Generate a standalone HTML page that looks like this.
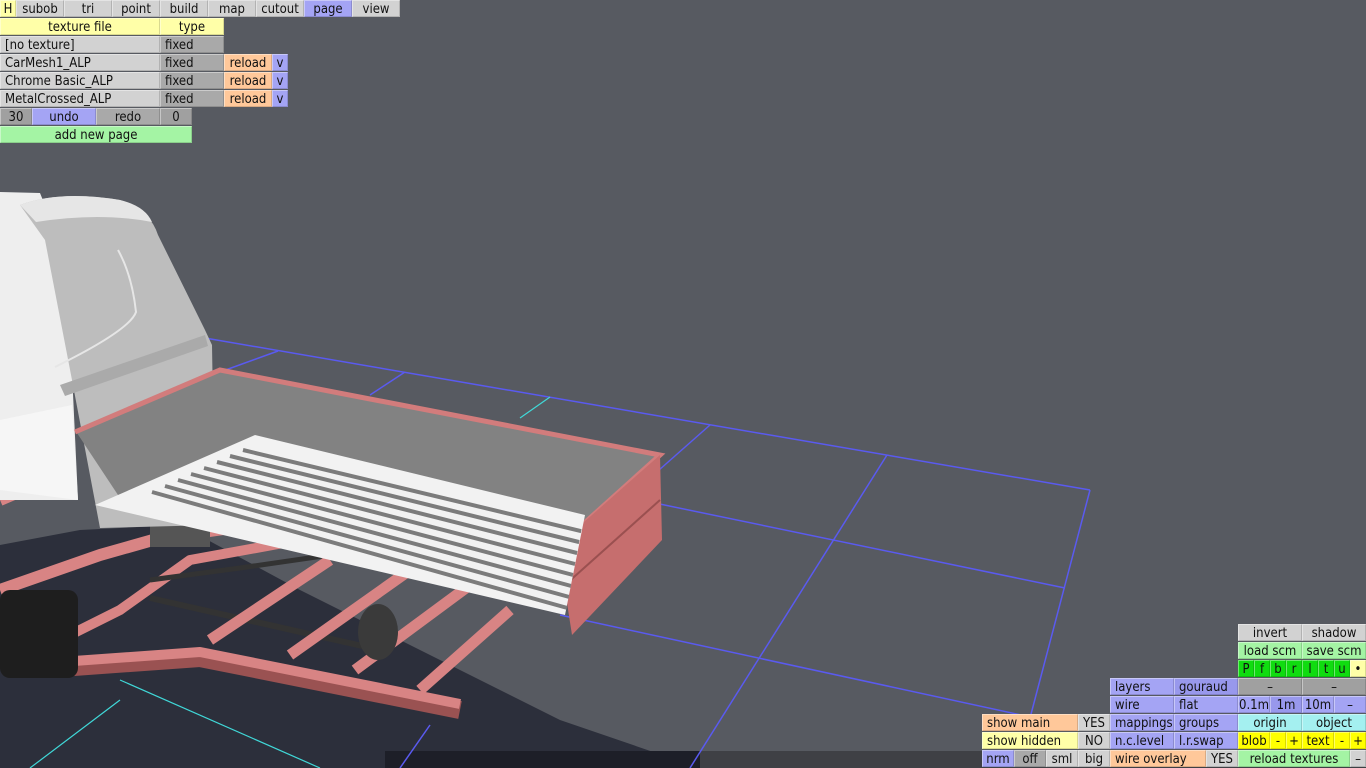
<!DOCTYPE html>
<html><head><meta charset="utf-8"><style>
html,body{margin:0;padding:0;width:1366px;height:768px;overflow:hidden;background:#575a61;}
.b{position:absolute;height:17px;box-sizing:border-box;font:13px/17px "DejaVu Sans Condensed","Liberation Sans",sans-serif;color:#111;text-align:center;white-space:nowrap;overflow:hidden;border-right:1px solid rgba(0,0,0,.15);border-bottom:1px solid rgba(0,0,0,.15);border-top:1px solid rgba(255,255,255,.4);border-left:1px solid rgba(255,255,255,.4)}
.l{text-align:left;padding-left:4px}
.g{background:#d2d2d2}.dg{background:#a9a9a9}.y{background:#ffffa8}.o{background:#ffc89a}.bl{background:#a4a4f4}.bd{background:#9898ec}.gr{background:#a4f4a4}.c{background:#a4f0f0}.gg{background:#10dc10}.yy{background:#ffff00}.mg{background:#a0a0a0}
</style></head><body>
<svg width="1366" height="768" style="position:absolute;left:0;top:0">
<defs><clipPath id="cp"><polygon points="97,504 256,436 584,516 566,612"/></clipPath></defs>
<polygon points="0,545 80,530 180,525 300,590 560,720 700,768 0,768" fill="#2c2f3b"/>
<polygon points="385,751 1366,751 1366,768 385,768" fill="#3f4045"/>
<polygon points="385,751 700,751 700,768 385,768" fill="#1d1f28"/>
<g stroke="#5a5af0" stroke-width="1.5" fill="none">
<line x1="205" y1="338" x2="1090" y2="490"/>
<line x1="1090" y1="490" x2="1030" y2="718"/>
<line x1="650" y1="502" x2="1065" y2="588"/>
<line x1="560" y1="615" x2="1035" y2="718"/>
<line x1="887" y1="455" x2="690" y2="768"/>
<line x1="710" y1="425" x2="650" y2="478"/>
<line x1="405" y1="372" x2="370" y2="395"/>
<line x1="278" y1="351" x2="220" y2="372"/>
<line x1="30" y1="380" x2="60" y2="372"/>
<line x1="0" y1="620" x2="30" y2="600"/>
<line x1="400" y1="768" x2="430" y2="725"/>
</g>
<g stroke="#40d8d8" stroke-width="1.2"><line x1="550" y1="397" x2="520" y2="418"/><line x1="120" y1="680" x2="320" y2="768"/><line x1="30" y1="768" x2="120" y2="700"/></g>
<!-- frame -->
<g stroke-linejoin="round" fill="none">
<polyline points="0,500 70,470" stroke="#d88484" stroke-width="12"/>
<polyline points="0,590 100,555 160,538 230,528" stroke="#d88484" stroke-width="12"/>
<polyline points="60,640 120,610 190,560 300,540" stroke="#d88484" stroke-width="10"/>
<line x1="150" y1="598" x2="380" y2="650" stroke="#333" stroke-width="6"/>
<polyline points="150,580 240,568 330,555" stroke="#333" stroke-width="5"/>
<g stroke="#d88484" stroke-width="11">
<line x1="210" y1="640" x2="330" y2="560"/>
<line x1="290" y1="655" x2="410" y2="570"/>
<line x1="355" y1="670" x2="470" y2="585"/>
<line x1="420" y1="690" x2="510" y2="610"/>
</g>
<polyline points="60,668 200,658 300,678 460,710" stroke="#9a5252" stroke-width="18"/>
<polyline points="60,662 200,652 300,672 460,704" stroke="#d88484" stroke-width="10"/>
</g>
<ellipse cx="378" cy="632" rx="20" ry="28" fill="#3a3a3a"/>
<rect x="0" y="590" width="78" height="88" rx="10" fill="#1e1e1e"/>
<rect x="150" y="515" width="60" height="32" fill="#555"/>
<!-- cab -->
<polygon points="0,192 40,193 55,230 70,330 78,500 0,500" fill="#eeeeee"/>
<polygon points="0,420 72,405 78,500 0,490" fill="#f6f6f6"/>
<path d="M20,205 Q60,190 120,200 Q150,210 158,235 L205,330 L212,345 L215,525 L100,528 L72,380 L45,240 Z" fill="#bdbdbd"/>
<path d="M20,205 Q60,190 120,200 Q145,206 152,222 Q100,212 36,222 Z" fill="#e6e6e6"/>
<polygon points="60,385 205,335 208,346 65,396" fill="#aaaaaa"/>
<path d="M118,250 Q132,275 136,312 Q130,330 55,367" stroke="#e6e6e6" stroke-width="2" fill="none"/>
<!-- bed -->
<polygon points="75,430 220,370 660,455 560,545 120,498" fill="#828282"/>
<polyline points="75,432 220,370 660,455 560,545" stroke="#d27c7c" stroke-width="5" fill="none"/>
<polygon points="558,545 660,455 662,540 572,635" fill="#c66e6e"/>
<line x1="565" y1="585" x2="660" y2="500" stroke="#9a5050" stroke-width="2"/>
<polygon points="95,505 255,435 585,515 565,615" fill="#f2f2f2"/>
<g stroke="#7c7c7c" stroke-width="4" clip-path="url(#cp)">
<line x1="243" y1="450" x2="585" y2="532"/>
<line x1="230" y1="456" x2="583" y2="543"/>
<line x1="217" y1="462" x2="581" y2="554"/>
<line x1="204" y1="468" x2="579" y2="565"/>
<line x1="191" y1="474" x2="577" y2="576"/>
<line x1="178" y1="480" x2="575" y2="587"/>
<line x1="165" y1="486" x2="573" y2="598"/>
<line x1="152" y1="492" x2="571" y2="609"/>
</g>
</svg>

<div class="b y" style="left:0;top:0;width:16px">H</div>
<div class="b g" style="left:16px;top:0;width:48px">subob</div>
<div class="b g" style="left:64px;top:0;width:48px">tri</div>
<div class="b g" style="left:112px;top:0;width:48px">point</div>
<div class="b g" style="left:160px;top:0;width:48px">build</div>
<div class="b g" style="left:208px;top:0;width:48px">map</div>
<div class="b g" style="left:256px;top:0;width:48px">cutout</div>
<div class="b bl" style="left:304px;top:0;width:48px">page</div>
<div class="b g" style="left:352px;top:0;width:48px">view</div>
<div class="b y" style="left:0;top:18px;width:160px">texture file</div>
<div class="b y" style="left:160px;top:18px;width:64px">type</div>
<div class="b g l" style="left:0;top:36px;width:160px">[no texture]</div>
<div class="b dg l" style="left:160px;top:36px;width:64px">fixed</div>
<div class="b g l" style="left:0;top:54px;width:160px">CarMesh1_ALP</div>
<div class="b dg l" style="left:160px;top:54px;width:64px">fixed</div>
<div class="b o" style="left:224px;top:54px;width:48px">reload</div>
<div class="b bl" style="left:272px;top:54px;width:16px">v</div>
<div class="b g l" style="left:0;top:72px;width:160px">Chrome Basic_ALP</div>
<div class="b dg l" style="left:160px;top:72px;width:64px">fixed</div>
<div class="b o" style="left:224px;top:72px;width:48px">reload</div>
<div class="b bl" style="left:272px;top:72px;width:16px">v</div>
<div class="b g l" style="left:0;top:90px;width:160px">MetalCrossed_ALP</div>
<div class="b dg l" style="left:160px;top:90px;width:64px">fixed</div>
<div class="b o" style="left:224px;top:90px;width:48px">reload</div>
<div class="b bl" style="left:272px;top:90px;width:16px">v</div>
<div class="b mg" style="left:0;top:108px;width:32px">30</div>
<div class="b bl" style="left:32px;top:108px;width:64px">undo</div>
<div class="b dg" style="left:96px;top:108px;width:64px">redo</div>
<div class="b mg" style="left:160px;top:108px;width:32px">0</div>
<div class="b gr" style="left:0;top:126px;width:192px">add new page</div>

<div class="b g" style="left:1238px;top:624px;width:64px">invert</div>
<div class="b g" style="left:1302px;top:624px;width:64px">shadow</div>
<div class="b gr" style="left:1238px;top:642px;width:64px">load scm</div>
<div class="b gr" style="left:1302px;top:642px;width:64px">save scm</div>
<div class="b gg" style="left:1238px;top:660px;width:16px">P</div>
<div class="b gg" style="left:1254px;top:660px;width:16px">f</div>
<div class="b gg" style="left:1270px;top:660px;width:16px">b</div>
<div class="b gg" style="left:1286px;top:660px;width:16px">r</div>
<div class="b gg" style="left:1302px;top:660px;width:16px">l</div>
<div class="b gg" style="left:1318px;top:660px;width:16px">t</div>
<div class="b gg" style="left:1334px;top:660px;width:16px">u</div>
<div class="b y" style="left:1350px;top:660px;width:16px">•</div>
<div class="b bl l" style="left:1110px;top:678px;width:64px">layers</div>
<div class="b bd l" style="left:1174px;top:678px;width:64px">gouraud</div>
<div class="b mg" style="left:1238px;top:678px;width:64px">–</div>
<div class="b mg" style="left:1302px;top:678px;width:64px">–</div>
<div class="b bl l" style="left:1110px;top:696px;width:64px">wire</div>
<div class="b bl l" style="left:1174px;top:696px;width:64px">flat</div>
<div class="b bl" style="left:1238px;top:696px;width:32px">0.1m</div>
<div class="b bd" style="left:1270px;top:696px;width:32px">1m</div>
<div class="b bl" style="left:1302px;top:696px;width:32px">10m</div>
<div class="b bl" style="left:1334px;top:696px;width:32px">–</div>
<div class="b o l" style="left:982px;top:714px;width:96px">show main</div>
<div class="b g" style="left:1078px;top:714px;width:32px">YES</div>
<div class="b bl l" style="left:1110px;top:714px;width:64px">mappings</div>
<div class="b bl l" style="left:1174px;top:714px;width:64px">groups</div>
<div class="b c" style="left:1238px;top:714px;width:64px">origin</div>
<div class="b c" style="left:1302px;top:714px;width:64px">object</div>
<div class="b y l" style="left:982px;top:732px;width:96px">show hidden</div>
<div class="b g" style="left:1078px;top:732px;width:32px">NO</div>
<div class="b bl l" style="left:1110px;top:732px;width:64px">n.c.level</div>
<div class="b bl l" style="left:1174px;top:732px;width:64px">l.r.swap</div>
<div class="b yy" style="left:1238px;top:732px;width:32px">blob</div>
<div class="b yy" style="left:1270px;top:732px;width:16px">-</div>
<div class="b yy" style="left:1286px;top:732px;width:16px">+</div>
<div class="b yy" style="left:1302px;top:732px;width:32px">text</div>
<div class="b yy" style="left:1334px;top:732px;width:16px">-</div>
<div class="b yy" style="left:1350px;top:732px;width:16px">+</div>
<div class="b bl" style="left:982px;top:750px;width:32px">nrm</div>
<div class="b dg" style="left:1014px;top:750px;width:32px">off</div>
<div class="b g" style="left:1046px;top:750px;width:32px">sml</div>
<div class="b g" style="left:1078px;top:750px;width:32px">big</div>
<div class="b o l" style="left:1110px;top:750px;width:96px">wire overlay</div>
<div class="b g" style="left:1206px;top:750px;width:32px">YES</div>
<div class="b gr" style="left:1238px;top:750px;width:112px">reload textures</div>
<div class="b g" style="left:1350px;top:750px;width:16px">–</div>
</body></html>
